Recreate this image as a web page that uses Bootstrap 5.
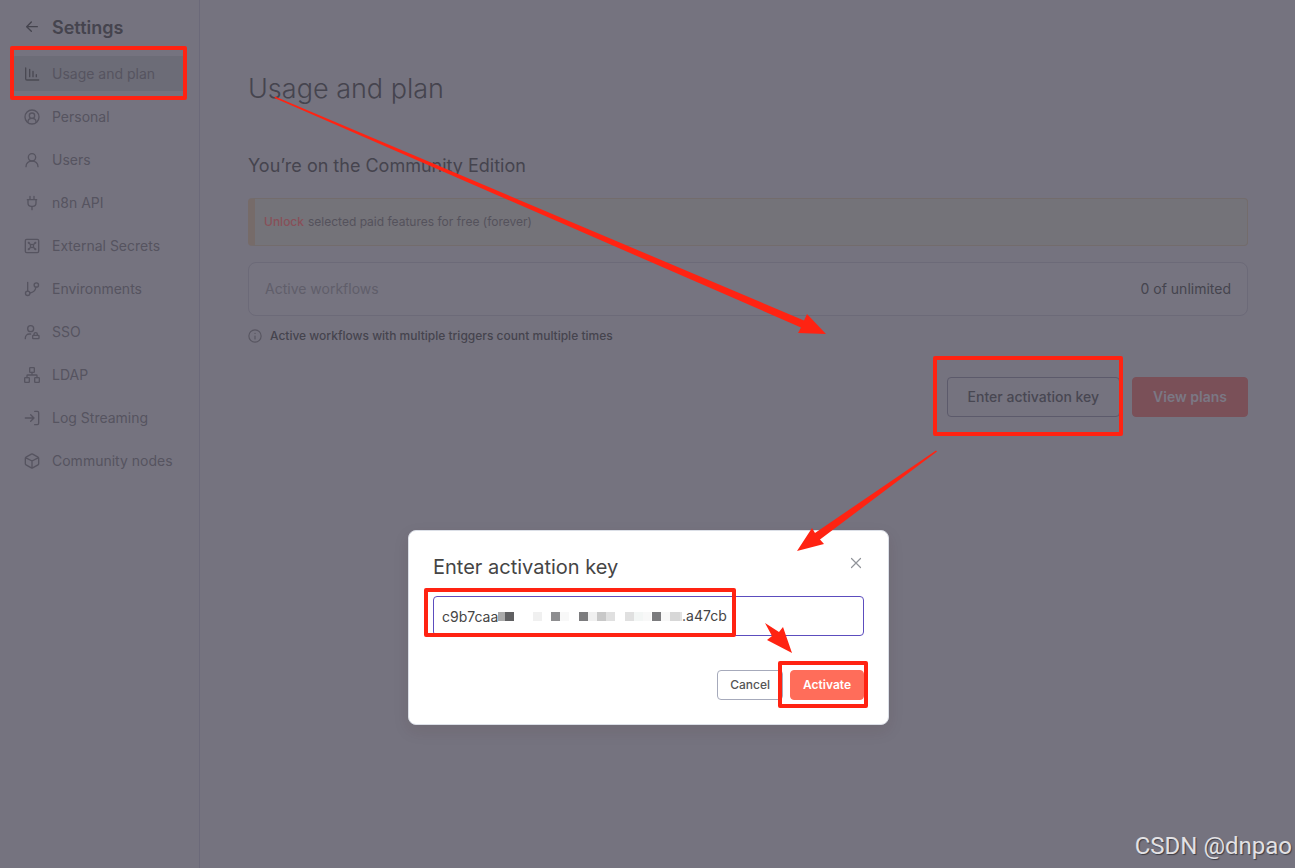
<!DOCTYPE html>
<html lang="en">
<head>
<meta charset="utf-8">
<meta name="viewport" content="width=device-width, initial-scale=1">
<title>Usage and plan</title>
<link href="https://cdn.jsdelivr.net/npm/bootstrap@5.3.0/dist/css/bootstrap.min.css" rel="stylesheet">
<style>
  body { background: #75737f; color: #45444e; font-family: Inter, sans-serif; font-size: 14px; line-height: 20px; }
  svg { fill: none; stroke: currentColor; stroke-width: 2; stroke-linecap: round; stroke-linejoin: round; flex: none; }
  .side { width: 200px; border-right: 1px solid #6b6979; padding: 16px 12px; }
  .side-title { font-size: 18px; line-height: 24px; font-weight: 600; margin: 0; }
  .side-head { padding: 0 12px; height: 24px; margin-bottom: 16px; }
  .side-link { height: 35px; padding: 0 12px; gap: 12px; color: #565460; text-decoration: none; border-radius: 4px; }
  .side-link.current { background: #6c6c77; }
  .side-link.current svg { color: #4a4953; }
  .page { padding: 73px 47px 48px 48px; }
  .page-title { font-size: 27px; line-height: 32px; font-weight: 300; margin: 0 0 47px; }
  .edition { font-size: 18px; line-height: 28px; font-weight: 400; margin: 0 0 18px; }
  .callout { height: 48px; padding: 0 9px; font-size: 12px; background: #747379; border: 1px solid #736c6c; border-left: 7px solid #766b69; border-radius: 4px; color: #54525c; }
  .callout a { color: #884f58; text-decoration: none; font-weight: 500; }
  .usage { height: 54px; margin-top: 16px; padding: 0 16px; background: #767480; border: 1px solid #6c6a78; border-radius: 8px; }
  .faint { color: #605e6a; }
  .note { font-size: 12px; font-weight: 500; margin: 10px 0 31px; gap: 8px; }
  .note svg { color: #585661; }
  .acts { gap: 12px; }
  .act { height: 40px; padding: 0 20px; border: 1px solid #5c5a6b; border-radius: 4px; background: none; color: #484752; font-size: 14px; font-weight: 500; }
  .act.solid { background: #7a5058; border-color: #7a5058; color: #7b7884; font-weight: 600; }
  .layer { padding-top: 530px; padding-left: 2px; }
  .dialog { width: 481px; height: 195px; padding: 24px; background: #fff; border: 1px solid #dbdfe7; border-radius: 8px; box-shadow: 0 6px 16px rgba(68, 28, 23, .1); }
  .dialog-head { margin-bottom: 17px; }
  .dialog-title { font-size: 20px; line-height: 24px; font-weight: 400; margin: 0; color: #454545; }
  .x { width: 16px; height: 16px; border: 0; padding: 0; background: none; color: #909399; }
  .key { height: 40px; padding: 0 8px; border: 1px solid #5c4dbe; border-radius: 4px; font-size: 14px; color: #454545; outline: 0; }
  .rest { left: 65px; top: 10px; color: #454545; }
  .dialog-foot { margin-top: 34px; gap: 7px; }
  .small-act { height: 30px; padding: 0 12px; border: 1px solid #a6aabb; border-radius: 4px; background: #fff; color: #555; font-size: 12px; font-weight: 500; }
  .small-act.solid { background: #ff6d5a; border-color: #ff6d5a; color: #fff; font-weight: 600; }
  .marks { z-index: 5; pointer-events: none; stroke: none; overflow: visible; }
  .mark-line { fill: none; stroke: #ff2312; stroke-width: 4; }
  .sign { right: 3px; bottom: 6px; z-index: 6; font: 24px/32px Roboto, sans-serif; color: #e2e1e4; text-shadow: 1px 1px 1px #3d3c44; }
</style>
</head>
<body>
<div class="d-flex min-vh-100 position-relative">
  <aside class="side flex-shrink-0">
    <div class="side-head d-flex gap-2 align-items-center">
      <svg width="16" height="16" viewBox="0 0 24 24" class="me-1"><path d="m11 17-7-7 7-7M4 10h16"/></svg>
      <h2 class="side-title">Settings</h2>
    </div>
    <nav class="d-flex flex-column gap-2">
      <a href="#" class="side-link current d-flex align-items-center"><svg width="16" height="16" viewBox="0 0 24 24"><path d="M2.500 3v16a2 2 0 0 0 2 2H22M8.500 5v11M13.500 8v8M18.500 13v3"/></svg>Usage and plan</a>
      <a href="#" class="side-link d-flex align-items-center"><svg width="16" height="16" viewBox="0 0 24 24"><circle cx="12" cy="12" r="10.500"/><circle cx="12" cy="10" r="4"/><path d="M6 20v-1c0-3 2.500-5 6-5s6 2 6 5v1"/></svg>Personal</a>
      <a href="#" class="side-link d-flex align-items-center"><svg width="16" height="16" viewBox="0 0 24 24"><circle cx="12" cy="8" r="5.500"/><path d="M3 22c0-5 4-8.500 9-8.500s9 3.500 9 8.500"/></svg>Users</a>
      <a href="#" class="side-link d-flex align-items-center"><svg width="16" height="16" viewBox="0 0 24 24"><path d="M12 22v-5M9 7V2M15 7V2M5 7h14M18 7v5a5 5 0 0 1-5 5h-2a5 5 0 0 1-5-5V7"/></svg>n8n API</a>
      <a href="#" class="side-link d-flex align-items-center"><svg width="16" height="16" viewBox="0 0 24 24"><rect x="2" y="2" width="20" height="20" rx="2"/><circle cx="12" cy="12" r="2.500"/><path d="m7 7 3 3M14 10l3-3M7 17l3-3M14 14l3 3"/><path stroke-width="3" d="M7 7h.1M17 7h.1M7 17h.1M17 17h.1"/></svg>External Secrets</a>
      <a href="#" class="side-link d-flex align-items-center"><svg width="16" height="16" viewBox="0 0 24 24"><path d="M5.500 2v13M18 9a11 11 0 0 1-9 9"/><circle cx="18.500" cy="6" r="3.300"/><circle cx="5.500" cy="18.500" r="3.300"/></svg>Environments</a>
      <a href="#" class="side-link d-flex align-items-center"><svg width="16" height="16" viewBox="0 0 24 24"><circle cx="10" cy="7" r="4.500"/><path d="M2 22v-1a6 6 0 0 1 6-6h2M15 17v-1.500a2.500 2.500 0 0 1 5 0V17"/><rect x="13" y="17" width="9.500" height="5" rx="1"/></svg>SSO</a>
      <a href="#" class="side-link d-flex align-items-center"><svg width="16" height="16" viewBox="0 0 24 24"><rect x="16" y="16" width="7" height="7" rx="1"/><rect x="1" y="16" width="7" height="7" rx="1"/><rect x="8.500" y="1" width="7" height="7" rx="1"/><path d="M4.500 16v-3a1 1 0 0 1 1-1h13a1 1 0 0 1 1 1v3M12 12V8"/></svg>LDAP</a>
      <a href="#" class="side-link d-flex align-items-center"><svg width="16" height="16" viewBox="0 0 24 24"><path d="M2 12h13M10 7l5 5-5 5M16 2h4a2 2 0 0 1 2 2v16a2 2 0 0 1-2 2h-4"/></svg>Log Streaming</a>
      <a href="#" class="side-link d-flex align-items-center"><svg width="16" height="16" viewBox="0 0 24 24"><path d="M11 1.700a2 2 0 0 1 2 0l8 4.600a2 2 0 0 1 1 1.700v8a2 2 0 0 1-1 1.700l-8 4.600a2 2 0 0 1-2 0l-8-4.600a2 2 0 0 1-1-1.700V8a2 2 0 0 1 1-1.700zM12 22V12M2.300 7 12 12l9.700-5"/></svg>Community nodes</a>
    </nav>
  </aside>

  <main class="page flex-grow-1">
    <h1 class="page-title">Usage and plan</h1>
    <h2 class="edition">You’re on the Community Edition</h2>
    <div class="callout d-flex align-items-center gap-1"><a href="#">Unlock</a><span>selected paid features for free (forever)</span></div>
    <div class="usage d-flex justify-content-between align-items-center"><span class="faint">Active workflows</span><span>0 of unlimited</span></div>
    <p class="note d-flex align-items-center"><svg width="14" height="14" viewBox="0 0 24 24"><circle cx="12" cy="12" r="10.500"/><path d="M12 17v-5M12 7.500h.1"/></svg>Active workflows with multiple triggers count multiple times</p>
    <div class="acts d-flex justify-content-end"><button type="button" class="act">Enter activation key</button><button type="button" class="act solid">View plans</button></div>
  </main>

  <div class="layer position-absolute top-0 start-0 w-100 d-flex justify-content-center">
    <section class="dialog" role="dialog" aria-labelledby="dialog-name">
      <div class="dialog-head d-flex justify-content-between">
        <h2 class="dialog-title" id="dialog-name"><label for="key">Enter activation key</label></h2>
        <button type="button" class="x d-flex" aria-label="Close"><svg width="16" height="16" viewBox="0 0 16 16"><path stroke-width="1.200" d="m3.500 3.500 9 9M12.500 3.500l-9 9"/></svg></button>
      </div>
      <div class="position-relative">
        <input class="key w-100" id="key" type="text" value="c9b7caa">
        <div class="rest position-absolute d-flex align-items-center">
          <!-- pixelated middle part of the key -->
          <svg width="184" height="9" viewBox="0 0 184 9" shape-rendering="crispEdges"><g stroke="none"><path fill="#aaa" d="M0 0h7v9H0z"/><path fill="#606062" d="M7 0h9v9H7z"/><path fill="#f0f0f0" d="M35 0h9v9h-9zM90 0h9v9h-9z"/><path fill="#8e8e90" d="M53 0h9v9h-9z"/><path fill="#f8f8f8" d="M62 0h9v9h-9zM144 0h9v9h-9zM163 0h9v9h-9z"/><path fill="#7c7c7e" d="M81 0h9v9h-9zM154 0h9v9h-9z"/><path fill="#c8c8c8" d="M99 0h9v9h-9z"/><path fill="#e0e0e0" d="M108 0h9v9h-9zM127 0h9v9h-9z"/><path fill="#f3f6f5" d="M136 0h9v9h-9z"/><path fill="#d7d7d7" d="M172 0h10v9h-10z"/><path fill="#e2e2e2" d="M182 0h2v9h-2z"/></g></svg><span>.a47cb</span>
        </div>
      </div>
      <div class="dialog-foot d-flex justify-content-end"><button type="button" class="small-act">Cancel</button><button type="button" class="small-act solid">Activate</button></div>
    </section>
  </div>

  <svg class="marks position-absolute top-0 start-0" width="1295" height="868" viewBox="0 0 1295 868" aria-hidden="true">
    <path class="mark-line" d="M12 48H185V98H12zM935 358H1121V434H935zM426 590H734V635H426zM780 663H866V706H780z"/>
    <g fill="#ff2312"><path d="M275 96.500 804 320.500 807 314 826 334 798 333 801 327.500 274.500 98z"/><path d="M937 451.500 820 539.500 824 544 797 551 812 528 815 533 936 450.500z"/><path d="M765 623 779 632 783 627 792 653 767 640 772 636z"/></g>
  </svg>
  <div class="sign position-absolute">CSDN @dnpao</div>
</div>
<script src="https://cdn.jsdelivr.net/npm/bootstrap@5.3.0/dist/js/bootstrap.bundle.min.js"></script>
</body>
</html>
